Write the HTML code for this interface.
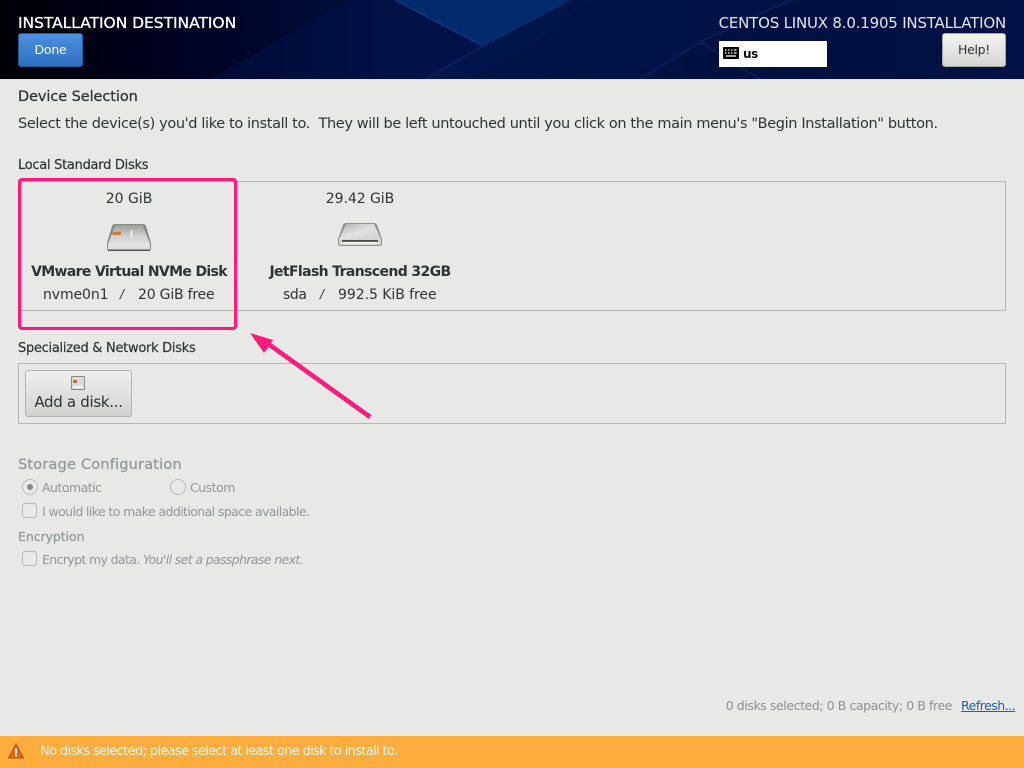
<!DOCTYPE html>
<html><head><meta charset="utf-8"><style>
html,body{margin:0;padding:0}
body{width:1024px;height:768px;overflow:hidden;background:#e8e8e7;position:relative;font-family:"DejaVu Sans","Liberation Sans",sans-serif;color:#2e3436}
.t{position:absolute;white-space:nowrap;line-height:18px;font-size:13px}
.c{transform:translateX(-50%)}
.b{font-weight:bold}
.g{color:#92979a}
.frame{position:absolute;border:1px solid #b5b5b2;box-sizing:border-box}
.chk{position:absolute;width:15px;height:15px;box-sizing:border-box;border:1px solid #b9b9b6;border-radius:3px;background:#e9e9e8}
.rad{position:absolute;width:16px;height:16px;box-sizing:border-box;border:1px solid #b9b9b6;border-radius:50%;background:#e9e9e8}
</style></head><body>
<svg style="position:absolute;left:0;top:0" width="1024" height="79" viewBox="0 0 1024 79">
<defs>
<linearGradient id="h" x1="0" x2="1" y1="0" y2="0"><stop offset="0" stop-color="#000006"/><stop offset=".14" stop-color="#00001c"/><stop offset=".35" stop-color="#000e3c"/><stop offset=".5" stop-color="#001448"/><stop offset=".7" stop-color="#001040"/><stop offset="1" stop-color="#001145"/></linearGradient>
</defs>
<rect width="1024" height="79" fill="url(#h)"/>
<polygon points="210,79 350,0 395,0 483,46 425,79" fill="#001550" opacity=".4"/>
<polygon points="395,0 570,0 483,46" fill="#002a6c"/>
<polygon points="483,46 570,0 590,0 540,40 470,79 425,79" fill="#00174c" opacity=".8"/>
<polygon points="570,0 790,0 700,42 640,79 540,79" fill="#001448" opacity=".7"/>
<path d="M395,0 483,46" stroke="#0a3f8a" stroke-width="1" fill="none"/>
<path d="M483,46 425,79M483,46 570,0" stroke="#052f70" stroke-width="1" fill="none"/>
<path d="M700,42 790,0M700,42 640,79M700,42 760,79" stroke="#052c6c" stroke-width="1" fill="none"/>
</svg>
<div style="position:absolute;left:0;top:79px;width:1024px;height:1px;background:#dfe3e6"></div>

<div class="t" style="left:18px;top:14px;font-size:15.500px;color:#fff;letter-spacing:-.04px;-webkit-text-stroke:.3px #fff">INSTALLATION DESTINATION</div>
<div style="position:absolute;left:18px;top:33px;width:65px;height:34px;box-sizing:border-box;border:1px solid #1f5a9e;border-radius:3px;background:linear-gradient(#4c92dd,#2d70c0);color:#fff;font-size:12.500px;line-height:32px;text-align:center;letter-spacing:-.2px">Done</div>
<div class="t" style="right:18px;top:14px;font-size:15px;color:#e3e6ea;letter-spacing:-.2px">CENTOS LINUX 8.0.1905 INSTALLATION</div>
<div style="position:absolute;left:719px;top:41px;width:108px;height:26px;background:#fff"></div>
<svg style="position:absolute;left:723px;top:47px" width="16" height="13" viewBox="0 0 16 13"><rect width="16" height="12" rx="1" fill="#000"/><path d="M2 3h1.500M5 3h1.500M8 3h1.500M11 3h2.500M2 6h1.500M5 6h1.500M8 6h1.500M11 6h2.500M3 9h10" stroke="#fff" stroke-width="1.200"/></svg>
<div class="t b" style="left:743px;top:45px;font-size:12px;color:#111;letter-spacing:-.4px">us</div>
<div style="position:absolute;left:942px;top:33px;width:64px;height:34px;box-sizing:border-box;border:1px solid #a8a8a5;border-radius:3px;background:linear-gradient(#f3f3f2,#d6d6d4);color:#2e3436;font-size:12.500px;line-height:32px;text-align:center;letter-spacing:-.3px">Help!</div>

<div class="t" style="left:18px;top:88px;font-size:14.500px;letter-spacing:-.08px;-webkit-text-stroke:.25px #2e3436">Device Selection</div>
<div class="t" style="left:18px;top:115px;font-size:14.500px;letter-spacing:-.367px">Select the device(s) you'd like to install to.&nbsp; They will be left untouched until you click on the main menu's "Begin Installation" button.</div>
<div class="t" style="left:18px;top:157px;font-size:13px;letter-spacing:-.28px;-webkit-text-stroke:.2px #2e3436">Local Standard Disks</div>

<div class="frame" style="left:18px;top:181px;width:988px;height:130px"></div>

<div class="t c" style="left:129px;top:190px;font-size:14px;letter-spacing:0">20 GiB</div>
<svg style="position:absolute;left:106px;top:222px" width="46" height="32" viewBox="0 0 46 32"><defs><linearGradient id="d1" x1="0" x2="0" y1="0" y2="1"><stop offset="0" stop-color="#9d9d9a"/><stop offset=".5" stop-color="#cfcfcd"/><stop offset="1" stop-color="#e4e4e2"/></linearGradient></defs>
<path d="M9 2H37Q39 2 40 4L45 21V26Q45 29 42 29H4Q1 29 1 26V21L6 4Q7 2 9 2Z" fill="#8a8a86"/>
<path d="M9.500 3H36.500L44 22V24H2V22Z" fill="url(#d1)"/>
<rect x="2" y="24" width="42" height="3.500" fill="#dededc"/><rect x="2" y="27.500" width="42" height="1.500" fill="#55554f"/>
<path d="M7 10L15 9.500L14.500 13H6Z" fill="#c97a3a"/><path d="M25.500 8V16" stroke="#f4f4f4" stroke-width="1.500"/>
</svg>
<div class="t c b" style="left:129px;top:263px;font-size:14px;letter-spacing:-.65px">VMware Virtual NVMe Disk</div>
<div class="t" style="left:43px;top:286px;font-size:14px;letter-spacing:-.1px">nvme0n1</div>
<div class="t" style="left:120px;top:285px;font-size:12px;font-style:italic">/</div>
<div class="t" style="left:138px;top:286px;font-size:14px;letter-spacing:-.2px">20 GiB free</div>

<div class="t c" style="left:360px;top:190px;font-size:14px;letter-spacing:-.05px">29.42 GiB</div>
<svg style="position:absolute;left:337px;top:222px" width="46" height="26" viewBox="0 0 46 26"><defs><linearGradient id="d2" x1="0" x2="1" y1="0" y2="1"><stop offset="0" stop-color="#b0b0ad"/><stop offset=".5" stop-color="#e2e2e0"/><stop offset="1" stop-color="#cfcfcc"/></linearGradient></defs>
<path d="M9 1H37Q39 1 40 3L45 17V22Q45 24 43 24H3Q1 24 1 22V17L6 3Q7 1 9 1Z" fill="#8f8f8a"/>
<path d="M9 2H37L44 17H2Z" fill="url(#d2)"/>
<rect x="2" y="17" width="42" height="6" fill="#d5d5d2"/><rect x="5" y="18" width="36" height="1.800" fill="#4a4a45"/><rect x="6" y="20" width="34" height="2" fill="#f3f3f1"/>
</svg>
<div class="t c b" style="left:360px;top:263px;font-size:14px;letter-spacing:-.62px">JetFlash Transcend 32GB</div>
<div class="t" style="left:283px;top:286px;font-size:14px;letter-spacing:-.4px">sda</div>
<div class="t" style="left:320px;top:285px;font-size:12px;font-style:italic">/</div>
<div class="t" style="left:338px;top:286px;font-size:14px;letter-spacing:-.05px">992.5 KiB free</div>

<div class="t" style="left:18px;top:340px;font-size:13px;letter-spacing:-.28px;-webkit-text-stroke:.2px #2e3436">Specialized &amp; Network Disks</div>
<div class="frame" style="left:18px;top:363px;width:988px;height:61px"></div>
<div style="position:absolute;left:25px;top:370px;width:107px;height:47px;box-sizing:border-box;border:1px solid #b3b3b0;border-radius:3px;background:linear-gradient(#efefee,#d2d2d0)"></div>
<svg style="position:absolute;left:71px;top:376px" width="14" height="14" viewBox="0 0 14 14"><rect x=".5" y=".5" width="13" height="13" rx="1" fill="#dcdcda" stroke="#8a8a86"/><rect x="2" y="4" width="4" height="3" fill="#c4703a"/><rect x="2" y="10" width="10" height="2" fill="#f6f6f5"/></svg>
<div class="t c" style="left:78.500px;top:393px;font-size:15px;letter-spacing:-.3px">Add a disk...</div>

<div class="t g" style="left:18px;top:456px;font-size:14.500px;letter-spacing:.2px;-webkit-text-stroke:.25px #92979a">Storage Configuration</div>
<div class="rad" style="left:22px;top:479px"></div><div style="position:absolute;left:27px;top:484px;width:6px;height:6px;border-radius:50%;background:#858a8d"></div>
<div class="t g" style="left:42px;top:479px;font-size:12.500px;letter-spacing:-.52px">Automatic</div>
<div class="rad" style="left:170px;top:479px"></div>
<div class="t g" style="left:190px;top:479px;font-size:12.500px;letter-spacing:-.5px">Custom</div>
<div class="chk" style="left:22px;top:503px"></div>
<div class="t g" style="left:42px;top:503px;font-size:12.500px;letter-spacing:-.6px">I would like to make additional space available.</div>
<div class="t g" style="left:18px;top:528px;font-size:12.500px;letter-spacing:-.06px;-webkit-text-stroke:.2px #92979a">Encryption</div>
<div class="chk" style="left:22px;top:551px"></div>
<div class="t g" style="left:42px;top:551px;font-size:12.500px;letter-spacing:-.63px">Encrypt my data. <i>You'll set a passphrase next.</i></div>

<div class="t" style="right:72px;top:697px;font-size:12.500px;letter-spacing:-.42px;color:#8d9193">0 disks selected; 0 B capacity; 0 B free</div>
<div class="t" style="left:961px;top:697px;font-size:12.500px;letter-spacing:-.5px;color:#1a5fb4;text-decoration:underline">Refresh...</div>

<div style="position:absolute;left:0;top:736px;width:1024px;height:32px;background:#fcad3e"></div>
<svg style="position:absolute;left:8px;top:743px" width="16" height="16" viewBox="0 0 16 16"><path d="M8 1L15.500 15H.5Z" fill="#e0680f" stroke="#b8540a" stroke-linejoin="round"/><rect x="7" y="5.500" width="2" height="5" fill="#fff"/><rect x="7" y="11.500" width="2" height="2" fill="#fff"/></svg>
<div class="t" style="left:40px;top:743px;font-size:13px;letter-spacing:-.66px;color:#fff6e6">No disks selected; please select at least one disk to install to.</div>

<div style="position:absolute;left:18px;top:178px;width:219px;height:152px;box-sizing:border-box;border:3.500px solid #ff1a7c;border-radius:4px"></div>
<svg style="position:absolute;left:240px;top:325px" width="140" height="100" viewBox="0 0 140 100"><path d="M130 92L27 18" stroke="#ff1a7c" stroke-width="4.500"/><path d="M10 8L33 15L24 28Z" fill="#ff1a7c"/></svg>
</body></html>
